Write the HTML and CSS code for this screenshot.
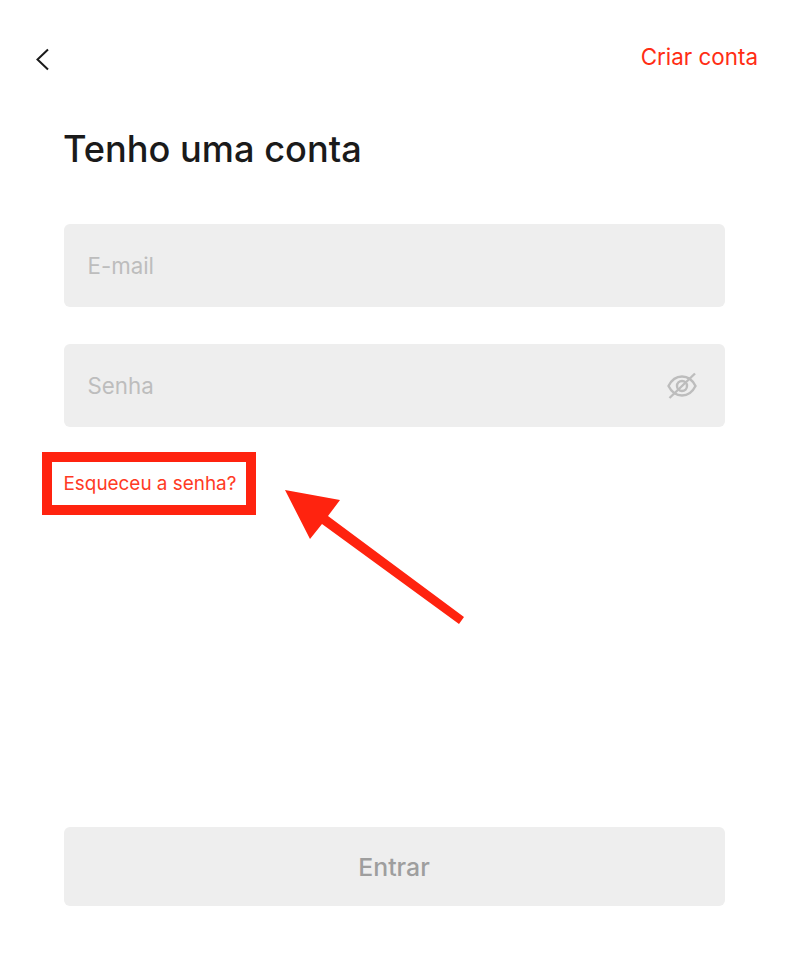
FILE: index.html
```html
<!DOCTYPE html>
<html lang="pt-BR">
<head>
  <meta charset="UTF-8">
  <meta name="viewport" content="width=device-width, initial-scale=1.0">
  <title>Tenho uma conta</title>
  <link rel="stylesheet" href="styles.css">
</head>
<body>

<section class="screen">
  <header class="top-bar">
    <button class="back-button" aria-label="Voltar">
      <svg width="16" height="24" viewBox="0 0 16 24" fill="none" stroke="#1a1a1a" stroke-width="2">
        <path d="M13 1.500 L2.500 11.500 L13 21.500"/>
      </svg>
    </button>
    <a class="create-link" href="#">Criar conta</a>
  </header>

  <h1 class="title">Tenho uma conta</h1>

  <div class="field field-email">
    <span class="placeholder">E-mail</span>
  </div>

  <div class="field field-password">
    <span class="placeholder">Senha</span>
    <svg class="eye-icon" width="32" height="28" viewBox="0 0 32 28" fill="none" stroke="#bdbdbd" stroke-width="2.4">
      <path d="M2.500 14 C6 7 10.500 4.500 16 4.500 C21.500 4.500 26 7 29.500 14 C26 21 21.500 23.500 16 23.500 C10.500 23.500 6 21 2.500 14 Z"/>
      <circle cx="16" cy="14" r="5"/>
      <path d="M29 1.500 L3.500 26"/>
    </svg>
  </div>

  <a class="forgot-link" href="#">Esqueceu a senha?</a>

  <button class="submit-button">Entrar</button>
</section>

<!-- Red annotation drawn over the screenshot -->
<div class="mark-box"></div>
<svg class="mark-arrow" width="788" height="970" viewBox="0 0 788 970">
  <path d="M285 490 L340 500 L328 516 L464 617 L459 624 L322 524 L310 539 Z" fill="#ff230f"/>
</svg>

</body>
</html>
```

FILE: styles.css
```css
* {box-sizing: border-box;}
body {font-family: Inter, "Liberation Sans", sans-serif; margin: 0; padding: 0; background-color: #fff;}

.screen {
  width: 788px;
  height: 970px;
  padding: 42px 30px 0 63.5px;
  display: flex;
  flex-direction: column;
}

/* Top bar */
.top-bar {
  display: flex;
  justify-content: space-between;
  align-items: center;
  height: 32px;
  margin-left: -29px;
}

.back-button {
  width: 16px;
  height: 24px;
  padding: 0;
  border: none;
  background: none;
  margin-top: 4px;
}

.create-link {
  font-size: 22.4px;
  color: #ff2d14;
  text-decoration: none;
  margin-top: -4px;
}

.title {
  margin: 50px 0 0 -0.5px;
  font-size: 36.2px;
  line-height: 50px;
  font-weight: 500;
  color: #1a1a1a;
}

/* Inputs */
.field {
  width: 661px;
  background-color: #eeeeee;
  border-radius: 6px;
  padding: 0 24px;
  display: flex;
  align-items: center;
  justify-content: space-between;
  font-size: 22.3px;
}

.field-email {
  height: 83px;
  margin-top: 50px;
}

.field-password {
  height: 83px;
  margin-top: 37px;
  padding-right: 27px;
}

.placeholder {color: #bdbdbd;}

.forgot-link {
  align-self: flex-start;
  margin-top: 45px;
  font-size: 18.9px;
  line-height: 24px;
  color: #ff3a24;
  text-decoration: none;
}

.submit-button {
  width: 661px;
  height: 79px;
  margin-top: 331px;
  border: none;
  border-radius: 6px;
  background-color: #eeeeee;
  color: #9e9e9e;
  font-family: inherit;
  font-size: 24.8px;
  font-weight: 500;
}

/* Annotation overlay */
.mark-box {
  position: absolute;
  left: 42px;
  top: 452px;
  width: 214px;
  height: 63px;
  border: 10px solid #ff230f;
}

.mark-arrow {
  position: absolute;
  left: 0;
  top: 0;
}
```
